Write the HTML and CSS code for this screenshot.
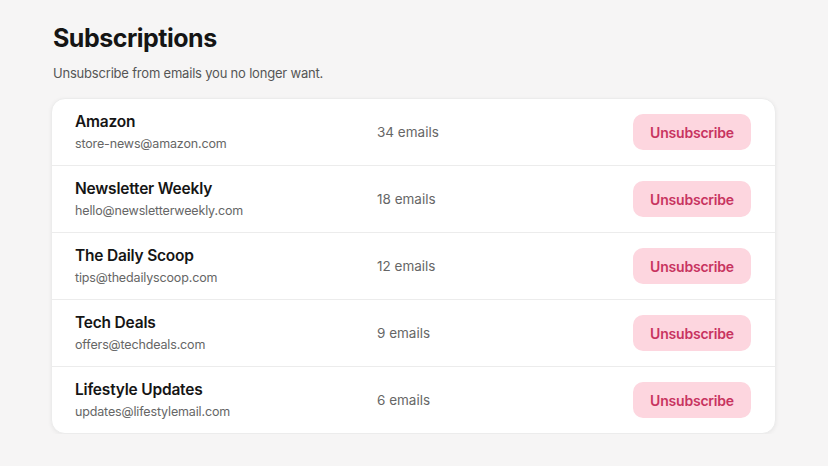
FILE: index.html
```html
<!DOCTYPE html>
<html lang="en">

<head>
    <meta charset="UTF-8">
    <meta name="viewport" content="width=device-width, initial-scale=1.0">
    <title>Subscriptions</title>
    <link rel="stylesheet" href="styles.css">
</head>

<body>
    <div id="page">
        <h1 class="title">Subscriptions</h1>
        <p class="subtitle">Unsubscribe from emails you no longer want.</p>

        <div class="card">
            <div class="row">
                <div class="sender">
                    <div class="name">Amazon</div>
                    <div class="email">store-news@amazon.com</div>
                </div>
                <div class="count">34 emails</div>
                <button class="unsub">Unsubscribe</button>
            </div>
            <div class="row">
                <div class="sender">
                    <div class="name">Newsletter Weekly</div>
                    <div class="email">hello@newsletterweekly.com</div>
                </div>
                <div class="count">18 emails</div>
                <button class="unsub">Unsubscribe</button>
            </div>
            <div class="row">
                <div class="sender">
                    <div class="name">The Daily Scoop</div>
                    <div class="email">tips@thedailyscoop.com</div>
                </div>
                <div class="count">12 emails</div>
                <button class="unsub">Unsubscribe</button>
            </div>
            <div class="row">
                <div class="sender">
                    <div class="name">Tech Deals</div>
                    <div class="email">offers@techdeals.com</div>
                </div>
                <div class="count">9 emails</div>
                <button class="unsub">Unsubscribe</button>
            </div>
            <div class="row">
                <div class="sender">
                    <div class="name">Lifestyle Updates</div>
                    <div class="email">updates@lifestylemail.com</div>
                </div>
                <div class="count">6 emails</div>
                <button class="unsub">Unsubscribe</button>
            </div>
        </div>
    </div>
</body>

</html>
```

FILE: styles.css
```css
body {
    font-family: Inter, "Liberation Sans", sans-serif;
    background-color: #f6f5f5;
    margin: 0;
    color: #151515;
}

#page {
    padding: 22px 52px 0 51px;
}

.title {
    font-size: 25px;
    font-weight: 700;
    letter-spacing: -0.5px;
    margin: 0 0 0 2px;
    line-height: 32px;
}

.subtitle {
    font-size: 13px;
    color: #555;
    letter-spacing: -0.2px;
    margin: 10px 0 0 2px;
    line-height: 18px;
}

.card {
    margin-top: 16px;
    background-color: #fff;
    border-radius: 14px;
    box-shadow: 0 1px 4px rgba(0, 0, 0, 0.06);
    border: 1px solid #ececec;
    overflow: hidden;
}

.row {
    display: grid;
    grid-template-columns: 302px 1fr auto;
    align-items: center;
    height: 66px;
    padding: 0 24px 0 23px;
    border-bottom: 1px solid #ececec;
}

.row:last-child {
    border-bottom: none;
}

.name {
    font-size: 15.5px;
    font-weight: 600;
    letter-spacing: -0.2px;
    line-height: 20px;
}

.email {
    font-size: 12.5px;
    color: #666;
    letter-spacing: -0.15px;
    margin-top: 3px;
    line-height: 18px;
}

.count {
    font-size: 13.5px;
    color: #666;
}

.unsub {
    font-family: inherit;
    font-size: 14px;
    font-weight: 600;
    letter-spacing: -0.2px;
    color: #c8345f;
    background-color: #fdd6df;
    border: none;
    border-radius: 10px;
    width: 118px;
    height: 36px;
    padding: 0;
}
```
